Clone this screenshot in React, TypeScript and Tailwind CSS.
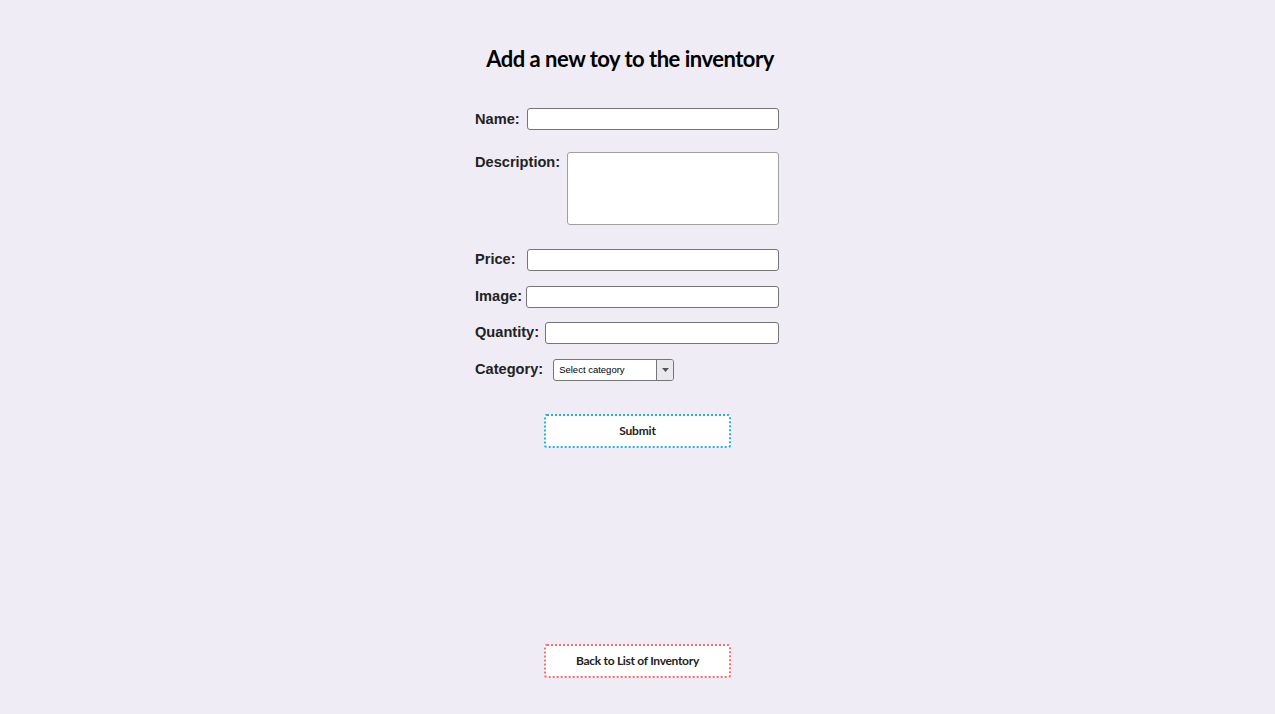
export default function App() {
  return (
    <div className="flex min-h-screen flex-col items-center bg-[#efecf5] font-['Liberation_Sans',Arial,sans-serif] text-[#222]">
      <div className="w-[325px] pt-[42px]">
        <h1 className="whitespace-nowrap pr-[15px] text-center font-['Lato',sans-serif] text-[22px] font-bold leading-[34px] tracking-[-0.5px] text-black">
          Add a new toy to the inventory
        </h1>

        <form className="pr-[21px] pt-[32px]" onSubmit={(e) => e.preventDefault()}>
          <div className="flex items-start">
            <label className="pt-[1px] text-[14.6px] font-bold leading-[20px]">Name:</label>
            <input className="ml-[7px] h-[22px] flex-1 rounded-[3px] border border-[#767676] bg-white" />
          </div>

          <div className="mt-[22px] flex items-start">
            <label className="text-[14.6px] font-bold leading-[20px]">Description:</label>
            <textarea className="ml-[7px] h-[73px] flex-1 resize-none rounded-[3px] border border-[#a0a0a0] bg-white" />
          </div>

          <div className="mt-[24px] flex items-start">
            <label className="text-[14.6px] font-bold leading-[20px]">Price:</label>
            <input className="ml-[11px] h-[22px] flex-1 rounded-[3px] border border-[#767676] bg-white" />
          </div>

          <div className="mt-[15px] flex items-start">
            <label className="text-[14.6px] font-bold leading-[20px]">Image:</label>
            <input className="ml-[4px] h-[22px] flex-1 rounded-[3px] border border-[#767676] bg-white" />
          </div>

          <div className="mt-[14px] flex items-start">
            <label className="text-[14.6px] font-bold leading-[20px]">Quantity:</label>
            <input className="ml-[6px] h-[22px] flex-1 rounded-[3px] border border-[#767676] bg-white" />
          </div>

          <div className="mt-[15px] flex items-start">
            <label className="text-[14.6px] font-bold leading-[20px]">Category:</label>
            <div className="ml-[10px] flex h-[22px] w-[121px] overflow-hidden rounded-[3px] border border-[#767676] bg-white">
              <span className="flex-1 pl-[5px] text-[9.5px] leading-[20px] text-black">Select category</span>
              <span className="flex w-[17px] items-center justify-center border-l border-[#767676] bg-[#e9e9ed]">
                <svg width="7" height="4" viewBox="0 0 7 4">
                  <path d="M0 0h7L3.5 4z" fill="#555" />
                </svg>
              </span>
            </div>
          </div>
        </form>
      </div>

      <button className="mt-[33px] h-[34px] w-[187px] rounded-[3px] border-2 border-dotted border-[#22b0e3] bg-white font-['Lato',sans-serif] text-[12px] font-bold tracking-[-0.2px] text-[#222]">
        Submit
      </button>

      <button className="mt-[196px] h-[34px] w-[187px] rounded-[3px] border-2 border-dotted border-[#ff6b6b] bg-white font-['Lato',sans-serif] text-[12px] font-bold tracking-[-0.3px] text-[#222]">
        Back to List of Inventory
      </button>
    </div>
  );
}
